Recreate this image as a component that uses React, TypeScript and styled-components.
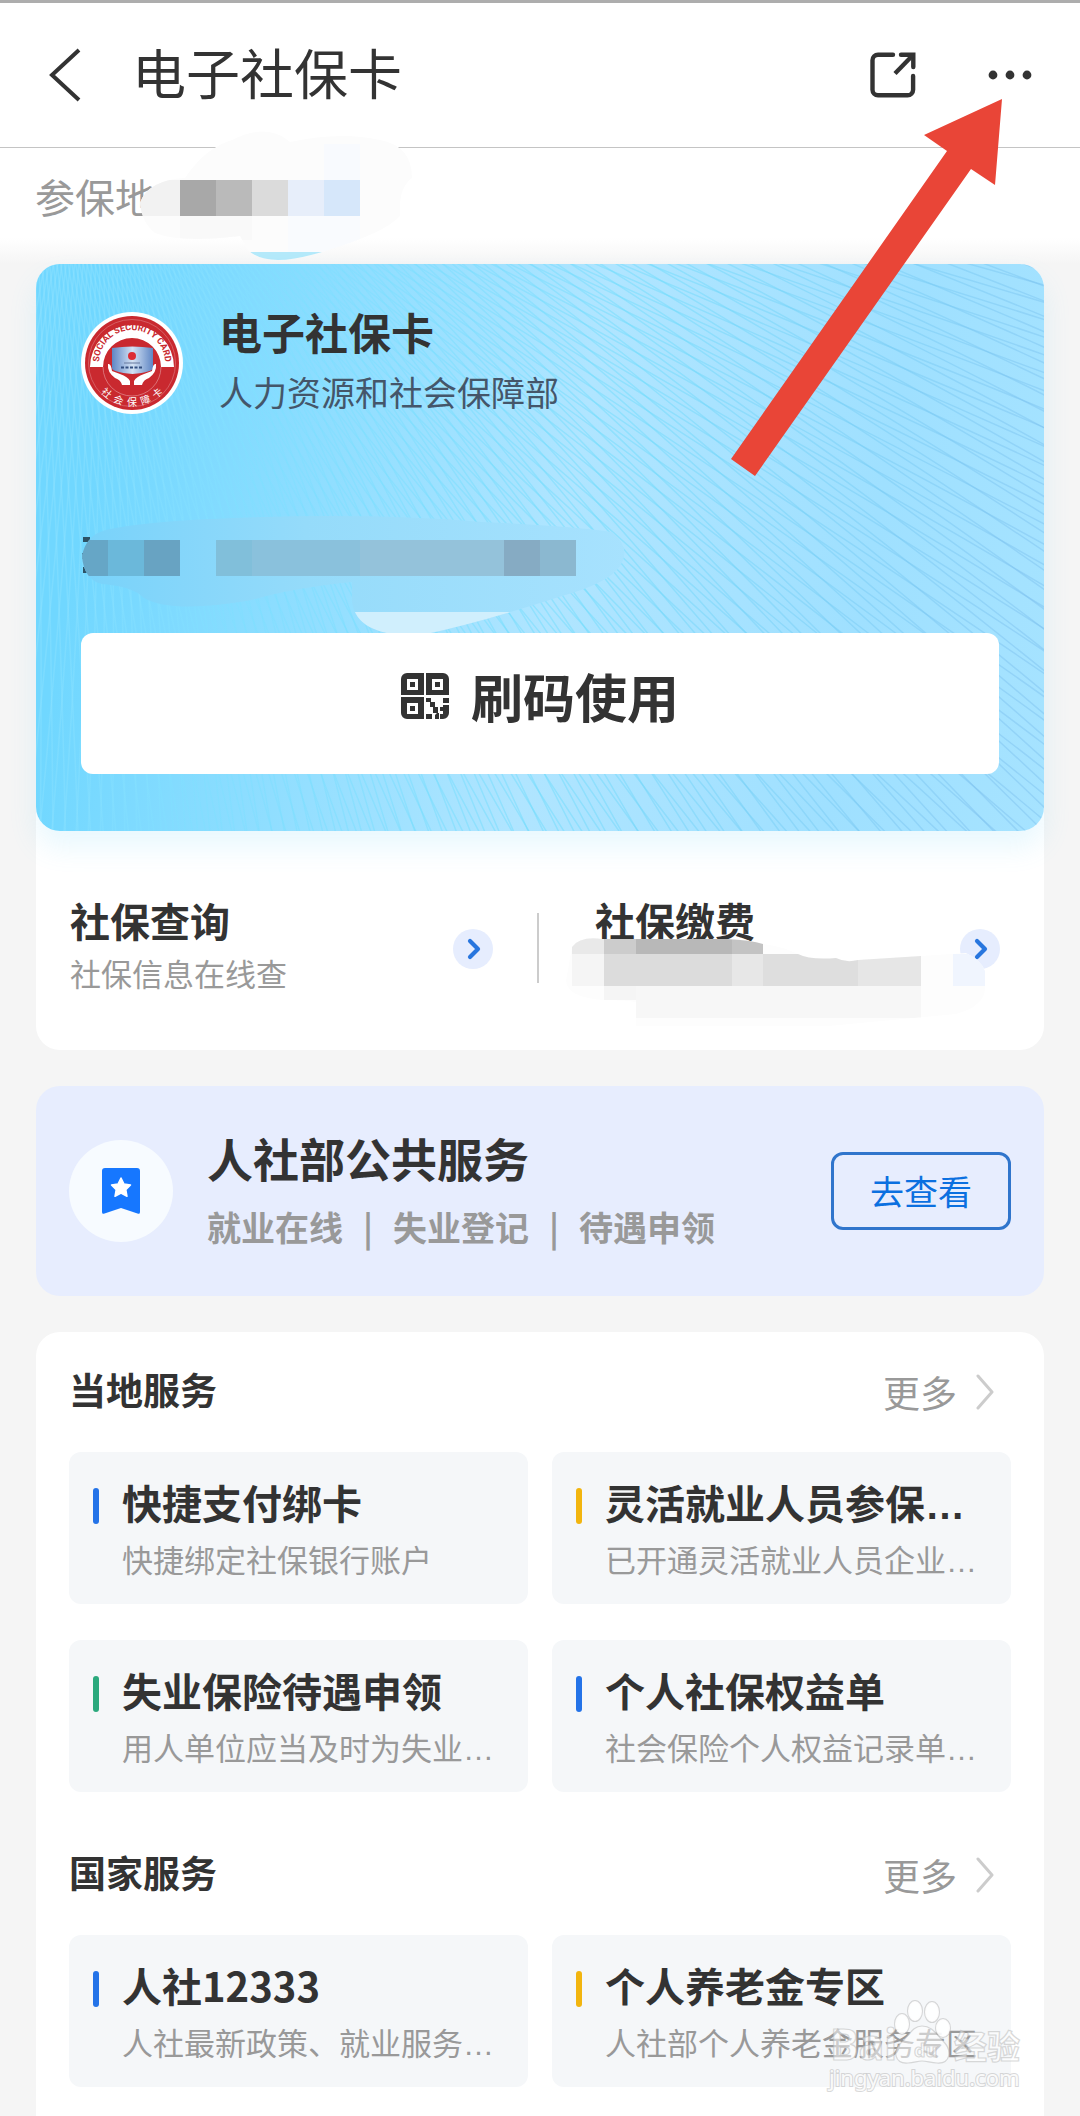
import React from "react";
import styled, { createGlobalStyle } from "styled-components";

const GlobalStyle = createGlobalStyle`
  * { box-sizing: border-box; }
  body {
    margin: 0;
    background: #f5f5f5;
    color: #333;
    font-family: "Noto Sans CJK SC", "Noto Sans", sans-serif;
  }
  h1, h2, h3, p { margin: 0; }
  button { font-family: inherit; color: inherit; border: 0; padding: 0; background: none; cursor: pointer; }
  a { color: inherit; text-decoration: none; }
  svg { display: block; }
`;

const Page = styled.div`
  position: relative;
  min-height: 100vh;
  display: flex;
  flex-direction: column;
  overflow: hidden;
`;

const Header = styled.header`
  display: flex;
  align-items: center;
  height: 148px;
  padding: 0 48px 0 44px;
  border-top: 3px solid #adadad;
  border-bottom: 1px solid #c4c4c4;
  background: #fff;
`;

const IconButton = styled.button`
  display: flex;
  align-items: center;
  justify-content: center;
`;

const PageTitle = styled.h1`
  flex: 1;
  margin-left: 46px;
  padding-bottom: 6px;
  font-size: 54px;
  line-height: 72px;
  font-weight: 400;
`;

const HeaderActions = styled.div`
  display: flex;
  align-items: center;
  gap: 72px;
`;

const Region = styled.section`
  position: relative;
  height: 116px;
  padding: 18px 35px 0;
  background: linear-gradient(#fff 90px, #f5f5f5 116px);
`;

const RegionLabel = styled.p`
  color: #999;
  font-size: 40px;
  line-height: 60px;
`;

const Smudge = styled.svg<{ $left: number; $top: number }>`
  position: absolute;
  left: ${(p) => p.$left}px;
  top: ${(p) => p.$top}px;
  pointer-events: none;
`;

const Main = styled.main`
  flex: 1;
  display: flex;
  flex-direction: column;
  gap: 36px;
  padding: 0 36px;
`;

const Panel = styled.section`
  position: relative;
  border-radius: 24px;
  background: #fff;
`;

const SocialCard = styled.div`
  position: relative;
  overflow: hidden;
  padding: 40px 45px 57px;
  border-radius: 24px;
  background: linear-gradient(100deg, #70d7ff 8%, #b0e5ff 52%, #9fe0ff 80%, #a6e3ff 100%);
`;

const CardShadow = styled.div`
  border-radius: 24px;
  box-shadow: 0 16px 28px rgba(90, 205, 245, 0.14);
`;

const Texture = styled.svg`
  position: absolute;
  inset: 0;
  width: 100%;
  height: 100%;
`;

const CardHead = styled.div`
  position: relative;
  display: flex;
  align-items: center;
  gap: 36px;
  height: 118px;
`;

const CardTitle = styled.h2`
  font-size: 43px;
  line-height: 58px;
  font-weight: 700;
`;

const CardIssuer = styled.p`
  color: #44566a;
  font-size: 34px;
  line-height: 64px;
`;

const ScanButton = styled.button`
  position: relative;
  display: flex;
  align-items: center;
  justify-content: center;
  gap: 22px;
  width: 100%;
  height: 141px;
  margin-top: 211px;
  padding-bottom: 16px;
  border-radius: 12px;
  background: #fff;
  font-size: 52px;
  font-weight: 700;
  line-height: 72px;
`;

const QuickLinks = styled.div`
  position: relative;
  display: grid;
  grid-template-columns: 1fr 2px calc(50% + 1px);
  align-items: center;
  height: 219px;
`;

const QuickLink = styled.a<{ $indent: number }>`
  display: flex;
  align-items: center;
  justify-content: space-between;
  padding: 16px 44px 0 ${(p) => p.$indent}px;
`;

const LinkText = styled.div`
  padding-bottom: 8px;
`;

const Divider = styled.span`
  height: 70px;
  margin-top: 14px;
  background: #ccc;
`;

const ItemTitle = styled.h3`
  font-size: 40px;
  line-height: 56px;
  font-weight: 700;
  white-space: nowrap;
`;

const ItemNote = styled.p`
  color: #999;
  font-size: 31px;
  line-height: 50px;
  white-space: nowrap;
`;

const Dots = styled.span`
  font-family: "Liberation Sans", sans-serif;
  line-height: 0;
`;

const Banner = styled.section`
  display: flex;
  align-items: center;
  height: 210px;
  padding: 0 33px;
  border-radius: 24px;
  background: #e7edfe;
`;

const BannerIcon = styled.span`
  display: flex;
  align-items: center;
  justify-content: center;
  width: 104px;
  height: 102px;
  border-radius: 50%;
  background: #f7fbff;
`;

const BannerText = styled.div`
  flex: 1;
  margin-left: 34px;
`;

const BannerTitle = styled.h2`
  font-size: 46px;
  line-height: 72px;
  font-weight: 700;
`;

const BannerTopics = styled.p`
  display: flex;
  color: #999;
  font-size: 34px;
  line-height: 68px;
  font-weight: 700;
`;

const Bar = styled.span`
  width: 50px;
  text-align: center;
`;

const OutlineButton = styled.button`
  width: 180px;
  height: 78px;
  border: 3px solid #3075cc;
  border-radius: 12px;
  color: #0b70e0;
  font-size: 34px;
  line-height: 70px;
`;

const ServicesPanel = styled.section`
  flex: 1;
  padding: 0 33px 28px;
  border-radius: 24px 24px 0 0;
  background: #fff;
`;

const ServiceGroup = styled.section`
  & + & { padding-top: 23px; }
`;

const GroupHead = styled.div`
  display: flex;
  align-items: center;
  justify-content: space-between;
  height: 120px;
`;

const GroupTitle = styled.h2`
  padding-bottom: 6px;
  font-size: 37px;
  line-height: 56px;
  font-weight: 700;
`;

const MoreLink = styled.a`
  display: flex;
  align-items: center;
  gap: 18px;
  padding-right: 16px;
  color: #999;
  font-size: 37px;
  line-height: 56px;
`;

const Tiles = styled.div`
  display: grid;
  grid-template-columns: 1fr 1fr;
  gap: 36px 24px;
`;

const Tile = styled.a`
  display: flex;
  gap: 23px;
  min-width: 0;
  height: 152px;
  padding: 22px 20px 0 24px;
  border-radius: 12px;
  background: #f5f7f9;
`;

const Accent = styled.span<{ $color: string }>`
  flex: none;
  width: 6px;
  height: 36px;
  margin-top: 14px;
  border-radius: 3px;
  background: ${(p) => p.$color};
`;

const TileText = styled.div`
  min-width: 0;
  ${ItemNote} { line-height: 58px; }
`;

const Pointer = styled.svg`
  position: absolute;
  top: 98px;
  right: 77px;
  pointer-events: none;
`;

const Watermark = styled.svg`
  position: absolute;
  right: 50px;
  bottom: 6px;
  pointer-events: none;
  font-family: "Noto Sans", "Noto Sans CJK SC", sans-serif;
`;

const BackIcon = () => (
  <svg width="42" height="56" viewBox="0 0 42 56" fill="none" stroke="#333" strokeWidth="4">
    <path d="M35 3 8 28l27 25" strokeLinejoin="miter" />
  </svg>
);

const ShareIcon = () => (
  <svg width="46" height="46" viewBox="0 0 46 46" fill="none" stroke="#333" strokeWidth="4.4">
    <path d="M23 2.700H8a5.500 5.500 0 0 0-5.500 5.500v29.600A5.500 5.500 0 0 0 8 43.300h29.600a5.500 5.500 0 0 0 5.500-5.500V24" strokeLinecap="round" />
    <path d="M31 2.700h12.300V15" strokeLinecap="round" />
    <path d="M42.500 3.500 25 21.500" />
  </svg>
);

const MoreDots = () => (
  <svg width="44" height="20" viewBox="0 0 44 20" fill="#333">
    <circle cx="5" cy="10" r="4.400" />
    <circle cx="22" cy="10" r="4.400" />
    <circle cx="39" cy="10" r="4.400" />
  </svg>
);

const Seal = () => (
  <svg width="102" height="102" viewBox="0 0 102 102">
    <defs>
      <path id="seal-top" d="M19.100 59.500a33 33 0 1 1 63.800 0" />
      <path id="seal-bottom" d="M8 51a43 43 0 0 0 86 0" />
      <linearGradient id="screen" x1="0" x2="1">
        <stop offset="0" stopColor="#5f86c4" />
        <stop offset="0.5" stopColor="#d3e2f4" />
        <stop offset="1" stopColor="#5f86c4" />
      </linearGradient>
    </defs>
    <circle cx="51" cy="51" r="51" fill="#fff" />
    <circle cx="51" cy="51" r="47" fill="#c9292f" />
    <circle cx="51" cy="51" r="43.500" fill="none" stroke="#dd8084" strokeWidth="0.600" />
    <path d="M9 55a42 42 0 1 1 84 0H80a29 29 0 1 0-58 0z" fill="#fff" />
    <path d="M22 55a29 29 0 0 0 58 0" fill="none" stroke="#e08286" strokeWidth="0.800" />
    <path d="M31 36q20-3 41 0v20q0 4-20.500 6Q31 60 31 56z" fill="url(#screen)" />
    <circle cx="51" cy="44" r="4" fill="#dc2d35" />
    <path d="M43 51h16" stroke="#66789d" strokeWidth="1" />
    <path d="M40 55.500h22" stroke="#334f80" strokeWidth="2" strokeDasharray="3 1.500" />
    <path d="M27 52q3-1 4 7l8 3q8 3 10 7v4h-8q-1-5-7-7-8-6-7-14zM75 52q-3-1-4 7l-8 3q-8 3-10 7v4h8q1-5 7-7 8-6 7-14z" fill="#fff" />
    <text fontFamily="'Liberation Sans Narrow', Roboto, sans-serif" fontSize="9" fontWeight="700" fill="#c9292f">
      <textPath href="#seal-top" startOffset="50%" textAnchor="middle">SOCIAL SECURITY CARD</textPath>
    </text>
    <text fontFamily="'Noto Sans CJK SC', sans-serif" fontSize="10" fill="#fff">
      <textPath href="#seal-bottom" startOffset="50%" textAnchor="middle">{"社\u2002会\u2002保\u2002障\u2002卡"}</textPath>
    </text>
  </svg>
);

const fan = (cx: number, cy: number, step: number) => {
  const parts: string[] = [];
  for (let deg = -5; deg < 125; deg += step) {
    const a = (deg * Math.PI) / 180;
    const ex = cx + Math.cos(a) * 1600;
    const ey = cy + Math.sin(a) * 1600;
    const mx = cx + Math.cos(a) * 700 + Math.sin(a) * 40;
    const my = cy + Math.sin(a) * 700 - Math.cos(a) * 40;
    parts.push(`M${cx} ${cy}Q${mx.toFixed(1)} ${my.toFixed(1)} ${ex.toFixed(1)} ${ey.toFixed(1)}`);
  }
  return parts.join("");
};

const CardTexture = () => (
  <Texture viewBox="0 0 1008 567" preserveAspectRatio="none" fill="none" aria-hidden="true">
    <defs>
      <linearGradient id="wave" gradientUnits="userSpaceOnUse" x1="0" y1="0" x2="1008" y2="200">
        <stop offset="0" stopColor="#95e4ff" stopOpacity="0.400" />
        <stop offset="0.250" stopColor="#7fdfff" stopOpacity="0.450" />
        <stop offset="0.600" stopColor="#70dcfc" stopOpacity="0.500" />
        <stop offset="1" stopColor="#7cc0ee" stopOpacity="0.450" />
      </linearGradient>
    </defs>
    <path d={fan(60, -300, 0.8)} stroke="url(#wave)" strokeWidth="1.500" />
    <path d={fan(-10, -230, 0.9)} stroke="url(#wave)" strokeWidth="1.500" />
  </Texture>
);

const QrIcon = () => (
  <svg width="48" height="46" viewBox="0 0 48 46" fill="#333">
    <path fillRule="evenodd" d="M6 0h17v22H0V6a6 6 0 0 1 6-6zM6 6v11h11V6zM25 0h17a6 6 0 0 1 6 6v16H25zM31 6v11h11V6zM0 24h23v22H6a6 6 0 0 1-6-6zM6 30v11h11V30z" />
    <path d="M9 9h5v5H9zM34 9h5v5h-5zM9 33h5v5H9zM25 25h5v4h4v5h3v6h-5v-6h-3v-5h-4zM42 25h6v5h-6zM25 41h6v5h-6zM36 40h2v6h-4v-4zM39 34h3v-2h6v8a6 6 0 0 1-6 6h-3v-5h3v-3h-3z" />
  </svg>
);

const RoundArrow = () => (
  <svg width="40" height="40" viewBox="0 0 40 40" fill="none">
    <circle cx="20" cy="20" r="20" fill="#e6edfe" />
    <path d="m17 12 8 8-8 8" stroke="#2876de" strokeWidth="4.200" strokeLinecap="round" strokeLinejoin="round" />
  </svg>
);

const Bookmark = () => (
  <svg width="40" height="48" viewBox="0 0 40 48">
    <path d="M4 1h32a3 3 0 0 1 3 3v41q0 2.500-2.500 1.600L20 41 3.500 46.600Q1 47.500 1 45V4a3 3 0 0 1 3-3z" fill="#1677ff" />
    <path d="m20 11 3 6 6.500 1-4.700 4.600 1.200 6.700L20 26.200l-6 3.100 1.200-6.700-4.700-4.600 6.500-1z" fill="#fff" stroke="#fff" strokeWidth="1.500" strokeLinejoin="round" />
  </svg>
);

const Chevron = () => (
  <svg width="20" height="36" viewBox="0 0 20 36" fill="none" stroke="#ccc" strokeWidth="3" strokeLinecap="round" strokeLinejoin="round">
    <path d="m3 2 14 16L3 34" />
  </svg>
);

type Cell = [x: number, y: number, w: number, h: number, color: string];

const Cells = ({ cells }: { cells: Cell[] }) => (
  <>
    {cells.map(([x, y, w, h, color]) => (
      <rect key={`${x}-${y}`} x={x} y={y} width={w} height={h} fill={color} />
    ))}
  </>
);

const regionCells: Cell[] = [
  [0, 52, 40, 36, "#f2f2f2"],
  [40, 52, 36, 36, "#a8a8a8"],
  [76, 52, 36, 36, "#bababa"],
  [112, 52, 36, 36, "#dbdbdb"],
  [148, 52, 36, 36, "#e7eefa"],
  [184, 52, 36, 36, "#d6e7fa"],
  [184, 16, 36, 36, "#f8fafe"],
  [148, 88, 72, 36, "#f9fbfe"],
  [40, 88, 72, 24, "#f9f9f9"],
  [100, 124, 90, 12, "#b4e9fa"],
];

const numberCells: Cell[] = [
  [0, 30, 26, 36, "#66a6c6"],
  [26, 30, 36, 36, "#6bb8da"],
  [62, 30, 36, 36, "#68a3c2"],
  [134, 30, 36, 36, "#81bfda"],
  [170, 30, 108, 36, "#8ac1dc"],
  [278, 30, 144, 36, "#94c2da"],
  [422, 30, 36, 36, "#86abc3"],
  [458, 30, 36, 36, "#8bb8d0"],
  [270, 102, 170, 24, "#d0effd"],
];

const payCells: Cell[] = [
  [6, 0, 32, 18, "#e9e9e9"],
  [38, 0, 32, 18, "#cccccc"],
  [70, 0, 96, 18, "#b8b8b8"],
  [166, 0, 31, 18, "#c3c3c3"],
  [6, 18, 32, 32, "#f5f5f5"],
  [38, 18, 128, 32, "#dcdcdc"],
  [166, 18, 31, 32, "#e7e7e7"],
  [197, 18, 95, 32, "#dedede"],
  [292, 18, 63, 32, "#e6e6e6"],
  [387, 18, 32, 32, "#f0f5fe"],
  [38, 50, 32, 14, "#f5f5f5"],
  [70, 50, 285, 32, "#f7f7f7"],
];

type Service = { title: string; note: string; color: string; cutTitle?: boolean; cutNote?: boolean };

const BLUE = "#2473e8";
const YELLOW = "#f2b50f";
const GREEN = "#2ba97d";

const groups: { name: string; items: Service[] }[] = [
  {
    name: "当地服务",
    items: [
      { title: "快捷支付绑卡", note: "快捷绑定社保银行账户", color: BLUE },
      { title: "灵活就业人员参保", note: "已开通灵活就业人员企业", color: YELLOW, cutTitle: true, cutNote: true },
      { title: "失业保险待遇申领", note: "用人单位应当及时为失业", color: GREEN, cutNote: true },
      { title: "个人社保权益单", note: "社会保险个人权益记录单", color: BLUE, cutNote: true },
    ],
  },
  {
    name: "国家服务",
    items: [
      { title: "人社12333", note: "人社最新政策、就业服务", color: BLUE, cutNote: true },
      { title: "个人养老金专区", note: "人社部个人养老金服务专区", color: YELLOW },
    ],
  },
];

export default function App() {
  return (
    <Page>
      <GlobalStyle />
      <Header>
        <IconButton aria-label="返回"><BackIcon /></IconButton>
        <PageTitle>电子社保卡</PageTitle>
        <HeaderActions>
          <IconButton aria-label="分享"><ShareIcon /></IconButton>
          <IconButton aria-label="更多选项"><MoreDots /></IconButton>
        </HeaderActions>
      </Header>

      <Region>
        <RegionLabel>参保地</RegionLabel>
        <Smudge $left={140} $top={-20} width="276" height="136" viewBox="0 0 276 136" aria-hidden="true">
          <defs>
            <clipPath id="region-brush">
              <path d="M0 75Q8 52 45 50Q65 20 92 12Q128-6 150 14Q200 3 240 12Q272 18 272 50Q258 60 260 88Q245 105 182 124Q155 132 138 132Q118 132 108 122L100 108Q40 115 15 105Q2 95 0 75z" />
            </clipPath>
          </defs>
          <g clipPath="url(#region-brush)">
            <rect width="276" height="136" fill="#fcfcfc" />
            <Cells cells={regionCells} />
          </g>
        </Smudge>
      </Region>

      <Main>
        <Panel>
          <CardShadow>
            <SocialCard>
              <CardTexture />
              <CardHead>
                <Seal />
                <div>
                  <CardTitle>电子社保卡</CardTitle>
                  <CardIssuer>人力资源和社会保障部</CardIssuer>
                </div>
              </CardHead>
              <Smudge $left={46} $top={246} width="560" height="126" viewBox="0 0 560 126" aria-hidden="true">
                <defs>
                  <clipPath id="number-brush">
                    <path d="M0 46Q4 25 24 20Q60 12 130 9Q280 2 400 12Q490 16 530 22Q552 40 535 60Q520 75 480 86Q400 112 340 125Q275 128 270 92V72Q210 78 170 90Q90 104 62 88Q50 76 20 74Q2 70 0 46z" />
                  </clipPath>
                  <linearGradient id="number-wash">
                    <stop offset="0" stopColor="#78d2fa" />
                    <stop offset="0.400" stopColor="#95dbfa" />
                    <stop offset="1" stopColor="#a8e2fe" />
                  </linearGradient>
                </defs>
                <path d="M1 27h7v5H1zM0 43h4v6H0zM1 57h5v6H1z" fill="#2d5366" />
                <g clipPath="url(#number-brush)">
                  <rect width="560" height="126" fill="url(#number-wash)" />
                  <Cells cells={numberCells} />
                </g>
              </Smudge>
              <ScanButton><QrIcon />刷码使用</ScanButton>
            </SocialCard>
          </CardShadow>
          <QuickLinks>
            <QuickLink href="#query" $indent={34}>
              <LinkText>
                <ItemTitle>社保查询</ItemTitle>
                <ItemNote>社保信息在线查</ItemNote>
              </LinkText>
              <RoundArrow />
            </QuickLink>
            <Divider />
            <QuickLink href="#pay" $indent={56}>
              <LinkText>
                <ItemTitle>社保缴费</ItemTitle>
                <ItemNote>&nbsp;</ItemNote>
              </LinkText>
              <RoundArrow />
            </QuickLink>
            <Smudge $left={530} $top={105} width="430" height="112" viewBox="0 0 430 112" aria-hidden="true">
              <defs>
                <clipPath id="pay-brush">
                  <path d="M6 11Q14 0 36 3H160Q185 4 197 8Q215 10 232 18Q244 24 270 22Q280 27 292 24L355 20L400 17Q415 24 419 35V50Q420 70 390 78L70 108V66Q60 64 38 64Q2 62 0 45z" />
                </clipPath>
              </defs>
              <g clipPath="url(#pay-brush)">
                <rect width="430" height="90" fill="#fdfdfd" />
                <Cells cells={payCells} />
              </g>
            </Smudge>
          </QuickLinks>
        </Panel>

        <Banner>
          <BannerIcon><Bookmark /></BannerIcon>
          <BannerText>
            <BannerTitle>人社部公共服务</BannerTitle>
            <BannerTopics>
              <span>就业在线</span><Bar>|</Bar><span>失业登记</span><Bar>|</Bar><span>待遇申领</span>
            </BannerTopics>
          </BannerText>
          <OutlineButton>去查看</OutlineButton>
        </Banner>

        <ServicesPanel>
          {groups.map((group) => (
            <ServiceGroup key={group.name}>
              <GroupHead>
                <GroupTitle>{group.name}</GroupTitle>
                <MoreLink href="#more">更多<Chevron /></MoreLink>
              </GroupHead>
              <Tiles>
                {group.items.map((item) => (
                  <Tile href="#service" key={item.title}>
                    <Accent $color={item.color} />
                    <TileText>
                      <ItemTitle>{item.title}{item.cutTitle && <Dots>…</Dots>}</ItemTitle>
                      <ItemNote>{item.note}{item.cutNote && <Dots>…</Dots>}</ItemNote>
                    </TileText>
                  </Tile>
                ))}
              </Tiles>
            </ServiceGroup>
          ))}
        </ServicesPanel>
      </Main>

      <Pointer width="272" height="378" viewBox="0 0 272 378" aria-hidden="true">
        <path d="M271 1 193 37l23 16L0 361l24 17L240 71l24 16z" fill="#e94537" />
      </Pointer>

      <Watermark width="210" height="120" viewBox="0 0 210 120" fill="#fff" fillOpacity="0.500" stroke="#b4b4b4" strokeOpacity="0.500" strokeWidth="1.200">
        <text x="10" y="70" fontSize="43" fontWeight="700">Bai</text>
        <path d="M102 36c-9 0-12 8-19 15-12 10-8 23 5 22 6 0 9-2 14-2s9 2 15 2c13 1 16-12 6-22-7-7-11-15-21-15z" />
        <text x="94" y="67" fontSize="18" fontWeight="700">du</text>
        <text x="134" y="69" fontSize="33" fontWeight="700">经验</text>
        <g paintOrder="stroke" fillOpacity="0.900" strokeWidth="2">
          <text x="9" y="96" fontSize="22">jingyan.baidu.com</text>
          <ellipse cx="95" cy="21" rx="7" ry="10" />
          <ellipse cx="112" cy="22" rx="7" ry="10" />
          <ellipse cx="82" cy="34" rx="7" ry="10" />
          <ellipse cx="123" cy="38" rx="7" ry="9" />
        </g>
      </Watermark>
    </Page>
  );
}
